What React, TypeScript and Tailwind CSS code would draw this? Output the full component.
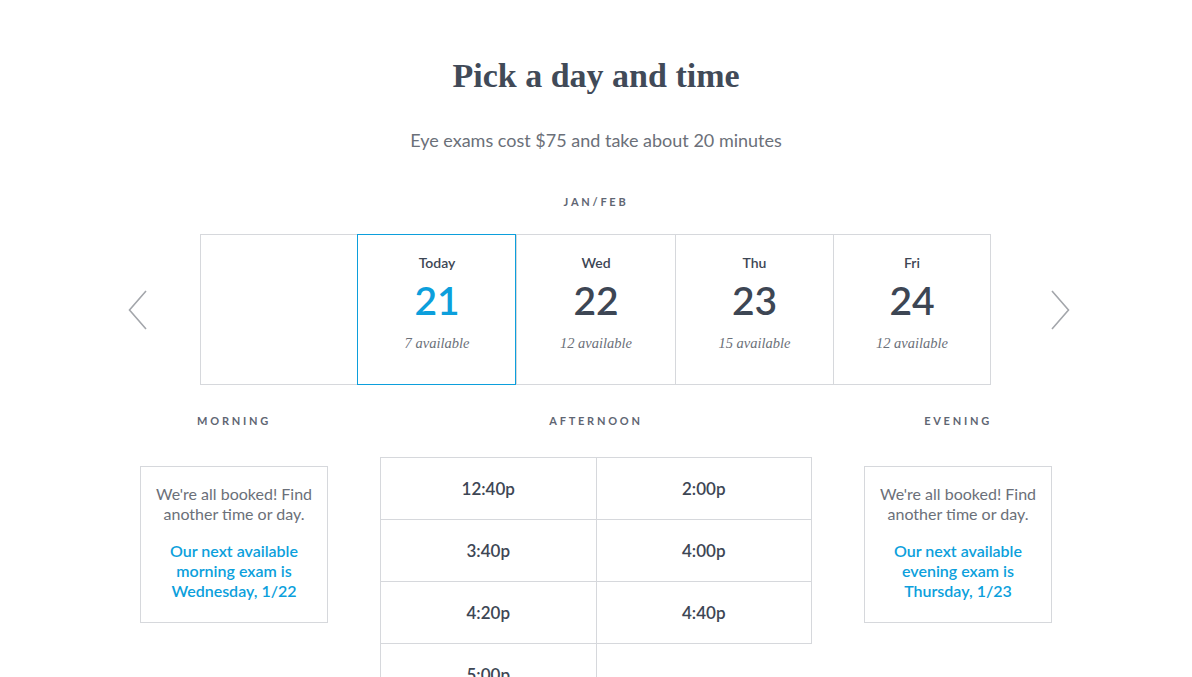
type Day = { label: string; num: string; avail: string; w: string; selected?: boolean };

const days: (Day | null)[] = [
  null,
  { label: "Today", num: "21", avail: "7 available", w: "w-[159px]", selected: true },
  { label: "Wed", num: "22", avail: "12 available", w: "w-[159px]" },
  { label: "Thu", num: "23", avail: "15 available", w: "w-[158px]" },
  { label: "Fri", num: "24", avail: "12 available", w: "w-[157px]" },
];

const times = ["12:40p", "2:00p", "3:40p", "4:00p", "4:20p", "4:40p", "5:00p", ""];

const sans = "font-['Lato','Open_Sans',sans-serif]";
const serif = "font-['Liberation_Serif','Times_New_Roman',serif]";

function SectionLabel({ children }: { children: string }) {
  return (
    <div className="text-center text-[11px] font-bold uppercase tracking-[0.25em] text-[#5f6673] leading-[14px]">
      {children}
    </div>
  );
}

function Booked({ part, next }: { part: string; next: string }) {
  return (
    <div className="mt-[38px] w-[188px] border border-[#d6d8dc] px-3 pt-[17px] pb-[21px] text-center text-[16px] leading-[20px]">
      <p className="text-[#6b7079]">We're all booked! Find another time or day.</p>
      <p className="mt-[17px] font-semibold text-[#0c9fdc]">
        Our next available {part} exam is {next}
      </p>
    </div>
  );
}

export default function App() {
  return (
    <div className={`min-h-screen bg-white ${sans} text-[#3d4654]`}>
      <div className="flex flex-col items-center pt-[56px]">
        <h1 className={`${serif} text-[34px] font-bold leading-[40px] text-[#414a58]`}>Pick a day and time</h1>
        <p className="mt-[32px] text-[18px] leading-[24px] text-[#6b7079]">
          Eye exams cost $75 and take about 20 minutes
        </p>
        <div className="mt-[43px] text-[11px] font-bold tracking-[0.25em] text-[#5f6673] leading-[14px]">JAN/FEB</div>

        <div className="mt-[25px] flex items-center pl-[6px]">
          <button className="mr-[53px] text-[#a3a6ab]">
            <svg width="19" height="40" viewBox="0 0 19 40" fill="none" stroke="currentColor" strokeWidth="1.6">
              <path d="M18 1 L1.5 20 L18 39" />
            </svg>
          </button>
          <div className="flex border-t border-b border-l border-[#d6d8dc]">
            {days.map((d, i) =>
              d ? (
                <div
                  key={i}
                  className={`relative flex h-[149px] ${d.w} flex-col items-center border-r border-[#d6d8dc]`}
                >
                  {d.selected && (
                    <span className="pointer-events-none absolute -top-px -bottom-px -left-px right-0 border border-[#0c9fdc]" />
                  )}
                  <div className="mt-[19px] text-[14px] font-semibold leading-[18px]">{d.label}</div>
                  <div
                    className={`mt-[6px] text-[39px] font-semibold leading-[44px] ${
                      d.selected ? "text-[#0c9fdc]" : "text-[#3d4654]"
                    }`}
                  >
                    {d.num}
                  </div>
                  <div className={`${serif} mt-[12px] text-[14.5px] italic leading-[18px] text-[#6b7079]`}>{d.avail}</div>
                </div>
              ) : (
                <div key={i} className="h-[149px] w-[157px] border-r border-[#d6d8dc]" />
              )
            )}
          </div>
          <button className="ml-[60px] text-[#a3a6ab]">
            <svg width="19" height="40" viewBox="0 0 19 40" fill="none" stroke="currentColor" strokeWidth="1.6">
              <path d="M1 1 L17.5 20 L1 39" />
            </svg>
          </button>
        </div>

        <div className="mt-[29px] flex items-start gap-[52px]">
          <div className="flex w-[188px] flex-col items-center">
            <SectionLabel>Morning</SectionLabel>
            <Booked part="morning" next="Wednesday, 1/22" />
          </div>
          <div className="flex w-[432px] flex-col items-center">
            <SectionLabel>Afternoon</SectionLabel>
            <div className="mt-[29px] grid w-[432px] grid-cols-2 border-l border-t border-[#d6d8dc]">
              {times.map((t, i) => (
                <div
                  key={i}
                  className={`flex h-[62px] items-center justify-center border-b border-r border-[#d6d8dc] text-[17px] font-semibold text-[#3d4654] ${
                    t === "" ? "border-r-0" : ""
                  }`}
                >
                  {t}
                </div>
              ))}
            </div>
          </div>
          <div className="flex w-[188px] flex-col items-center">
            <SectionLabel>Evening</SectionLabel>
            <Booked part="evening" next="Thursday, 1/23" />
          </div>
        </div>
      </div>
    </div>
  );
}
